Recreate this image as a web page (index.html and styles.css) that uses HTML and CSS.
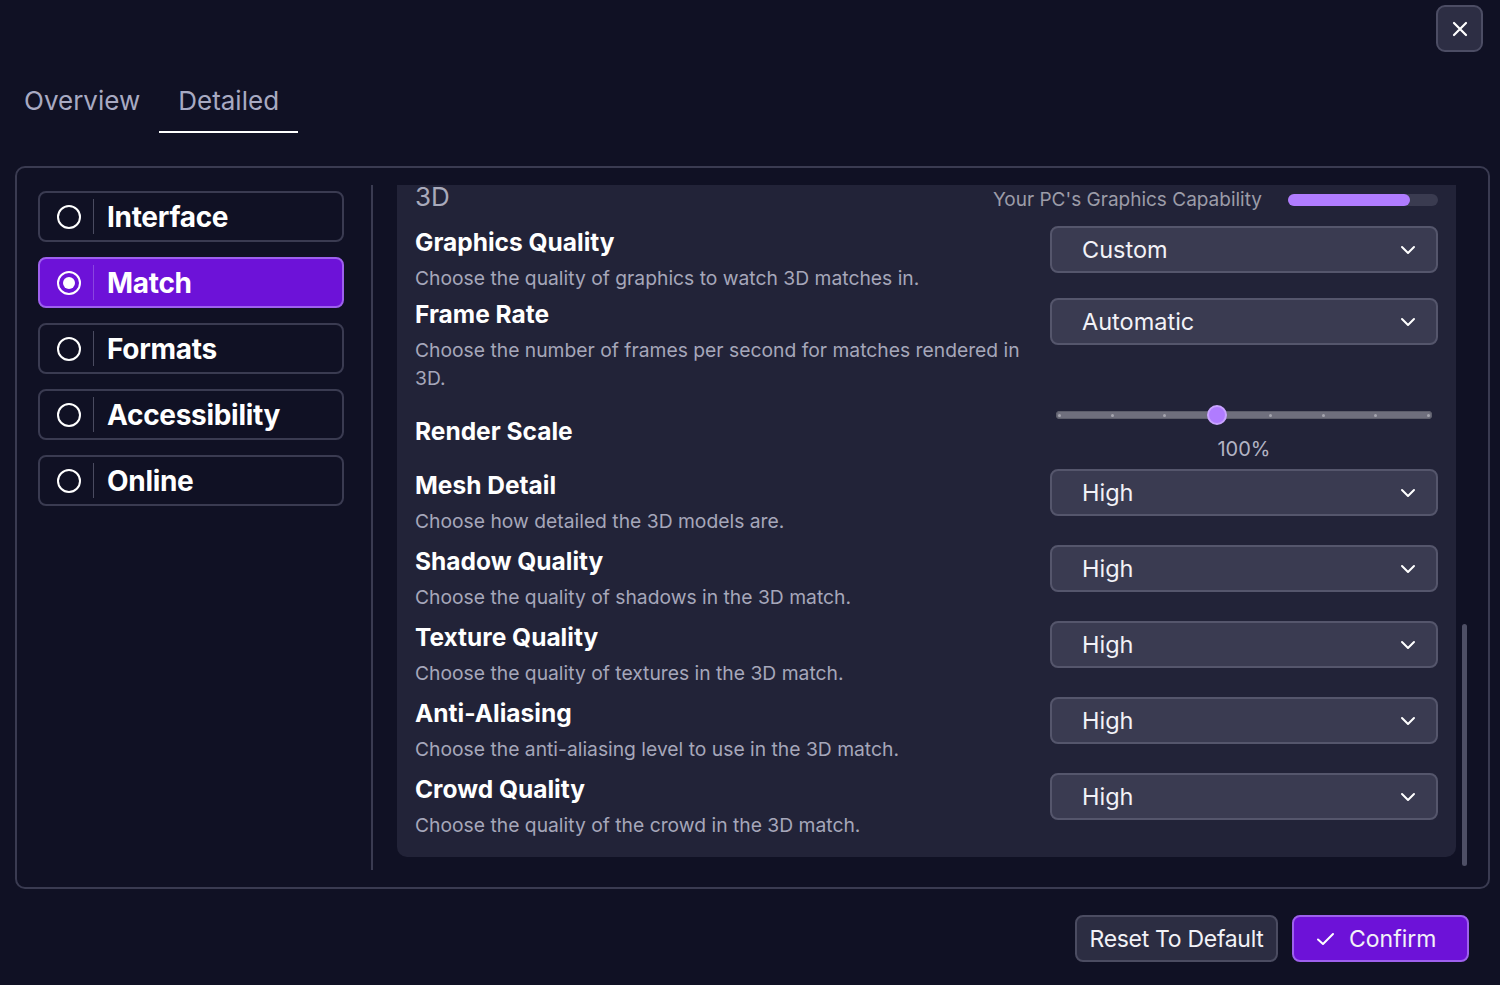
FILE: index.html
```html
<!DOCTYPE html>
<html lang="en">
<head>
  <meta charset="utf-8" />
  <title>Settings — Detailed</title>
  <meta name="viewport" content="width=device-width,initial-scale=1" />
  <link rel="stylesheet" href="styles.css">
</head>
<body>
  <div class="topbar">
    <button class="close-btn" aria-label="Close">
      <svg width="16" height="16" viewBox="0 0 16 16"><path d="M2 2L14 14M14 2L2 14" stroke="#fff" stroke-width="2.2" stroke-linecap="round"/></svg>
    </button>
  </div>

  <nav class="tabs">
    <span class="tab">Overview</span>
    <span class="tab active">Detailed</span>
  </nav>

  <main class="settings-panel">
    <aside class="sidebar">
      <div class="side-item"><span class="radio"></span><span class="side-sep"></span><span class="side-label">Interface</span></div>
      <div class="side-item active"><span class="radio"></span><span class="side-sep"></span><span class="side-label">Match</span></div>
      <div class="side-item"><span class="radio"></span><span class="side-sep"></span><span class="side-label">Formats</span></div>
      <div class="side-item"><span class="radio"></span><span class="side-sep"></span><span class="side-label">Accessibility</span></div>
      <div class="side-item"><span class="radio"></span><span class="side-sep"></span><span class="side-label">Online</span></div>
    </aside>

    <div class="divider"></div>

    <div class="scroll-area">
      <div class="viewport">
        <section class="group">
          <div class="group-head">
            <h2>3D</h2>
            <div class="capability">
              <span>Your PC's Graphics Capability</span>
              <div class="cap-bar"><div class="cap-fill" style="width: 81%"></div></div>
            </div>
          </div>

          <div class="setting first">
            <div class="info">
              <h3>Graphics Quality</h3>
              <p>Choose the quality of graphics to watch 3D matches in.</p>
            </div>
            <div class="select">Custom<svg width="16" height="10" viewBox="0 0 16 10"><path d="M2 2l6 6 6-6" fill="none" stroke="#fff" stroke-width="2" stroke-linecap="round" stroke-linejoin="round"/></svg></div>
          </div>

          <div class="setting">
            <div class="info">
              <h3>Frame Rate</h3>
              <p>Choose the number of frames per second for matches rendered in 3D.</p>
            </div>
            <div class="select">Automatic<svg width="16" height="10" viewBox="0 0 16 10"><path d="M2 2l6 6 6-6" fill="none" stroke="#fff" stroke-width="2" stroke-linecap="round" stroke-linejoin="round"/></svg></div>
          </div>

          <div class="setting slider-row">
            <div class="info">
              <h3>Render Scale</h3>
            </div>
            <div class="slider">
              <div class="track">
                <i></i><i></i><i></i><i></i><i></i><i></i><i></i><i></i>
                <span class="thumb" style="left: 42.86%"></span>
              </div>
              <div class="slider-value">100%</div>
            </div>
          </div>

          <div class="setting">
            <div class="info">
              <h3>Mesh Detail</h3>
              <p>Choose how detailed the 3D models are.</p>
            </div>
            <div class="select">High<svg width="16" height="10" viewBox="0 0 16 10"><path d="M2 2l6 6 6-6" fill="none" stroke="#fff" stroke-width="2" stroke-linecap="round" stroke-linejoin="round"/></svg></div>
          </div>

          <div class="setting">
            <div class="info">
              <h3>Shadow Quality</h3>
              <p>Choose the quality of shadows in the 3D match.</p>
            </div>
            <div class="select">High<svg width="16" height="10" viewBox="0 0 16 10"><path d="M2 2l6 6 6-6" fill="none" stroke="#fff" stroke-width="2" stroke-linecap="round" stroke-linejoin="round"/></svg></div>
          </div>

          <div class="setting">
            <div class="info">
              <h3>Texture Quality</h3>
              <p>Choose the quality of textures in the 3D match.</p>
            </div>
            <div class="select">High<svg width="16" height="10" viewBox="0 0 16 10"><path d="M2 2l6 6 6-6" fill="none" stroke="#fff" stroke-width="2" stroke-linecap="round" stroke-linejoin="round"/></svg></div>
          </div>

          <div class="setting">
            <div class="info">
              <h3>Anti-Aliasing</h3>
              <p>Choose the anti-aliasing level to use in the 3D match.</p>
            </div>
            <div class="select">High<svg width="16" height="10" viewBox="0 0 16 10"><path d="M2 2l6 6 6-6" fill="none" stroke="#fff" stroke-width="2" stroke-linecap="round" stroke-linejoin="round"/></svg></div>
          </div>

          <div class="setting">
            <div class="info">
              <h3>Crowd Quality</h3>
              <p>Choose the quality of the crowd in the 3D match.</p>
            </div>
            <div class="select">High<svg width="16" height="10" viewBox="0 0 16 10"><path d="M2 2l6 6 6-6" fill="none" stroke="#fff" stroke-width="2" stroke-linecap="round" stroke-linejoin="round"/></svg></div>
          </div>
        </section>
      </div>
      <div class="scrollbar"><div class="scroll-thumb"></div></div>
    </div>
  </main>

  <footer class="actions">
    <button class="btn reset">Reset To Default</button>
    <button class="btn primary">
      <svg width="19" height="14" viewBox="0 0 19 14"><path d="M2 7.5L7 12L17 2" fill="none" stroke="#fff" stroke-width="2" stroke-linecap="round" stroke-linejoin="round"/></svg>
      Confirm
    </button>
  </footer>
</body>
</html>
```

FILE: styles.css
```css
body {
  background: #101124;
  font-family: 'Inter', 'Liberation Sans', sans-serif;
  color: #fff;
  margin: 0;
  padding: 0;
}
h2, h3, p { margin: 0; }

.topbar {
  display: flex;
  justify-content: flex-end;
  padding: 5px 17px 0 0;
}
.close-btn {
  width: 47px;
  height: 47px;
  background: #2d2e44;
  border: 2px solid #4c4d64;
  border-radius: 9px;
  display: flex;
  align-items: center;
  justify-content: center;
  padding: 0;
}

.tabs {
  display: flex;
  margin: 19px 0 0 5px;
}
.tab {
  padding: 12px 19px;
  line-height: 36px;
  font-size: 26px;
  color: #a8aac2;
  border-bottom: 2px solid transparent;
}
.tab.active { border-bottom-color: #fff; }

.settings-panel {
  display: flex;
  box-sizing: border-box;
  height: 723px;
  margin: 33px 10px 0 15px;
  padding: 17px 20px 17px 21px;
  border: 2px solid #3a3b51;
  border-radius: 10px;
}

.sidebar {
  width: 306px;
  padding-top: 6px;
  display: flex;
  flex-direction: column;
  gap: 15px;
}
.side-item {
  display: flex;
  align-items: center;
  height: 51px;
  box-sizing: border-box;
  border: 2px solid #3a3b51;
  border-radius: 8px;
  padding-left: 17px;
}
.side-item.active {
  background: #6d12d8;
  border-color: #9e60ee;
}
.radio {
  width: 20px;
  height: 20px;
  border: 2.5px solid #fff;
  border-radius: 50%;
  box-sizing: content-box;
  display: flex;
  align-items: center;
  justify-content: center;
}
.side-item.active .radio::after {
  content: '';
  width: 12px;
  height: 12px;
  border-radius: 50%;
  background: #fff;
}
.side-sep {
  width: 1px;
  height: 35px;
  background: #4a4b60;
  margin: 0 13px 0 12px;
}
.side-item.active .side-sep { background: #8a45e0; }
.side-label {
  font-size: 28px;
  font-weight: 700;
  letter-spacing: -0.3px;
}

.divider {
  width: 2px;
  background: #3a3b51;
  margin: 0 24px 0 27px;
}

.scroll-area {
  display: flex;
  gap: 6px;
}
.viewport {
  width: 1059px;
  overflow: hidden;
}
/* list is scrolled a little, so the top corners are hidden */
.group {
  background: #222338;
  border-radius: 0 0 10px 10px;
  padding: 0 18px 18px;
  display: flex;
  flex-direction: column;
  gap: 10px;
}
.group-head {
  display: flex;
  justify-content: space-between;
  align-items: flex-start;
  margin-bottom: 4px;
}
.group-head h2 {
  font-size: 26px;
  font-weight: 400;
  line-height: 22px;
  padding-top: 1px;
  color: #a9aabb;
}
.capability {
  display: flex;
  align-items: center;
  gap: 26px;
  margin-top: 3px;
  line-height: 24px;
  font-size: 19px;
  color: #9c9ca8;
}
.cap-bar {
  width: 150px;
  height: 12px;
  border-radius: 6px;
  background: #3a3b50;
}
.cap-fill {
  height: 100%;
  border-radius: 6px;
  background: #b07cff;
}

.setting {
  display: flex;
  justify-content: space-between;
  align-items: flex-start;
}
.setting.first { margin-bottom: -4px; }
.info { width: 614px; }
.info h3 {
  font-size: 24.5px;
  font-weight: 700;
  line-height: 32px;
}
.info p {
  margin-top: 6px;
  font-size: 19.3px;
  line-height: 28px;
  color: #a6a7ba;
}
.select {
  width: 388px;
  height: 47px;
  box-sizing: border-box;
  display: flex;
  align-items: center;
  justify-content: space-between;
  padding: 0 20px 0 30px;
  background: #3a3b51;
  border: 2px solid #55566c;
  border-radius: 8px;
  font-size: 23.5px;
  color: #f2f2f7;
}

.slider-row { align-items: center; }
.slider {
  width: 388px;
  padding-top: 9px;
}
.track {
  position: relative;
  margin: 0 6px;
  height: 8px;
  border-radius: 4px;
  background: #6f6f7d;
  box-shadow: inset 0 0 0 1px #5d5e6b;
  display: flex;
  justify-content: space-between;
  align-items: center;
  padding: 0 2px;
}
.track i {
  width: 3px;
  height: 3px;
  border-radius: 50%;
  background: #a4a4ae;
}
.thumb {
  position: absolute;
  top: 50%;
  width: 16px;
  height: 16px;
  margin: -10px 0 0 -10px;
  border-radius: 50%;
  background: #b07cff;
  border: 2px solid #c9a4ff;
}
.slider-value {
  margin-top: 20px;
  text-align: center;
  font-size: 20px;
  line-height: 20px;
  color: #b3b4c4;
}

.scrollbar {
  width: 5px;
  padding-top: 439px;
}
.scroll-thumb {
  height: 242px;
  border-radius: 3px;
  background: #4e4f65;
}

.actions {
  display: flex;
  justify-content: flex-end;
  gap: 14px;
  margin: 26px 31px 0 0;
}
.btn {
  height: 47px;
  box-sizing: border-box;
  display: flex;
  align-items: center;
  gap: 14px;
  padding: 0 13px;
  font-family: inherit;
  font-size: 23px;
  color: #f2f2f7;
  background: #2c2d42;
  border: 2px solid #4b4c61;
  border-radius: 8px;
}
.btn.reset {
  width: 203px;
  justify-content: center;
  padding: 0;
  letter-spacing: -0.3px;
}
.btn.primary {
  width: 177px;
  padding-left: 22px;
  background: #6d12d8;
  border-color: #9e60ee;
}
```
